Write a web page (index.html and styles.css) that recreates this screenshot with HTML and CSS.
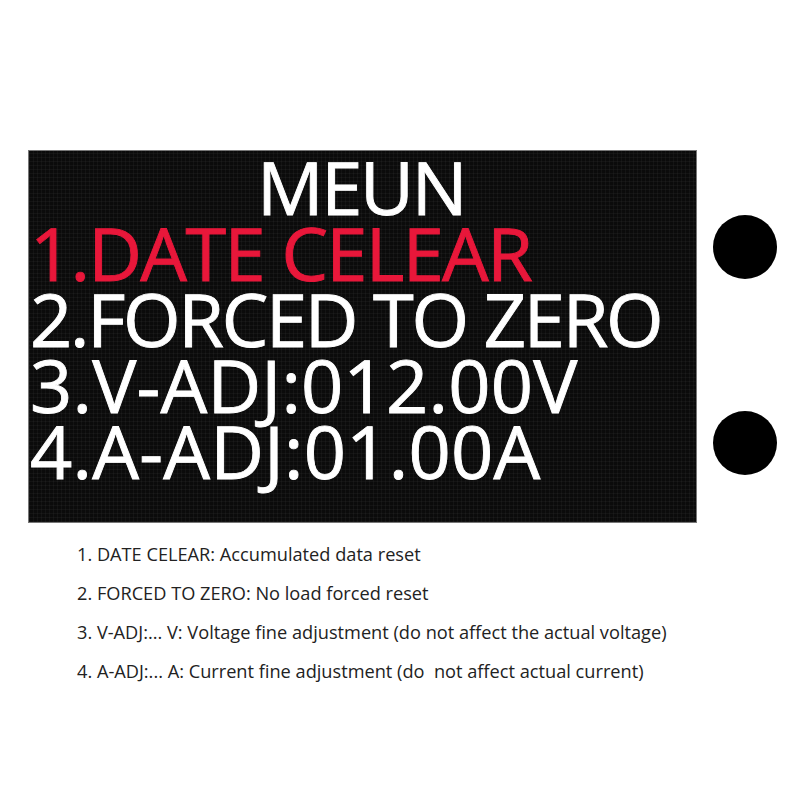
FILE: index.html
```html
<!DOCTYPE html>
<html>
<head>
<meta charset="utf-8">
<link rel="stylesheet" href="styles.css">
</head>
<body>
<div class="page">
  <div class="top">
    <div class="screen">
      <div class="line title">MEUN</div>
      <div class="line red">1.DATE CELEAR</div>
      <div class="line">2.FORCED TO ZERO</div>
      <div class="line num">3.V-ADJ:012.00V</div>
      <div class="line num">4.A-ADJ:01.00A</div>
    </div>
    <div class="buttons">
      <span class="btn"></span>
      <span class="btn"></span>
    </div>
  </div>
  <ol class="notes">
    <li>1. DATE CELEAR: Accumulated data reset</li>
    <li>2. FORCED TO ZERO: No load forced reset</li>
    <li>3. V-ADJ:... V: Voltage fine adjustment (do not affect the actual voltage)</li>
    <li>4. A-ADJ:... A: Current fine adjustment (do&nbsp; not affect actual current)</li>
  </ol>
</div>
</body>
</html>
```
FILE: styles.css
```css
html, body {
  margin: 0;
  padding: 0;
  background: #fff;
}
.page {
  width: 800px;
  height: 800px;
  padding-top: 150px;
  box-sizing: border-box;
}
.top {
  display: flex;
  align-items: flex-start;
  padding-left: 28px;
}
/* LCD panel with a faint pixel grid */
.screen {
  width: 669px;
  height: 373px;
  box-sizing: border-box;
  background-color: #0b0b0b;
  background-image:
    repeating-linear-gradient(90deg, rgba(255,255,255,0.035) 0 1px, transparent 1px 4px),
    repeating-linear-gradient(0deg, rgba(255,255,255,0.035) 0 1px, transparent 1px 4px);
  border: 1px solid #777;
  font-family: "Open Sans", sans-serif;
  font-size: 74px;
  letter-spacing: -2.3px;
  color: #fff;
  -webkit-text-stroke: 0.9px currentColor;
  padding: 3px 0 0 1px;
  display: flex;
  flex-direction: column;
}
.line {
  height: 66px;
  line-height: 66px;
  white-space: nowrap;
}
.num {
  letter-spacing: 0.2px;
}
.title {
  text-align: center;
  padding-right: 4px;
}
.red {
  color: #e8173a;
  letter-spacing: -1.7px;
}
.buttons {
  display: flex;
  flex-direction: column;
  gap: 132px;
  margin-left: 16px;
  margin-top: 65px;
}
.btn {
  display: block;
  width: 64px;
  height: 64px;
  border-radius: 50%;
  background: #000;
}
.notes {
  list-style: none;
  margin: 12px 0 0 77px;
  padding: 0;
  font-family: "Open Sans", sans-serif;
  font-size: 18.2px;
  color: #222;
}
.notes li {
  height: 39px;
  line-height: 39px;
  white-space: pre;
}
```
